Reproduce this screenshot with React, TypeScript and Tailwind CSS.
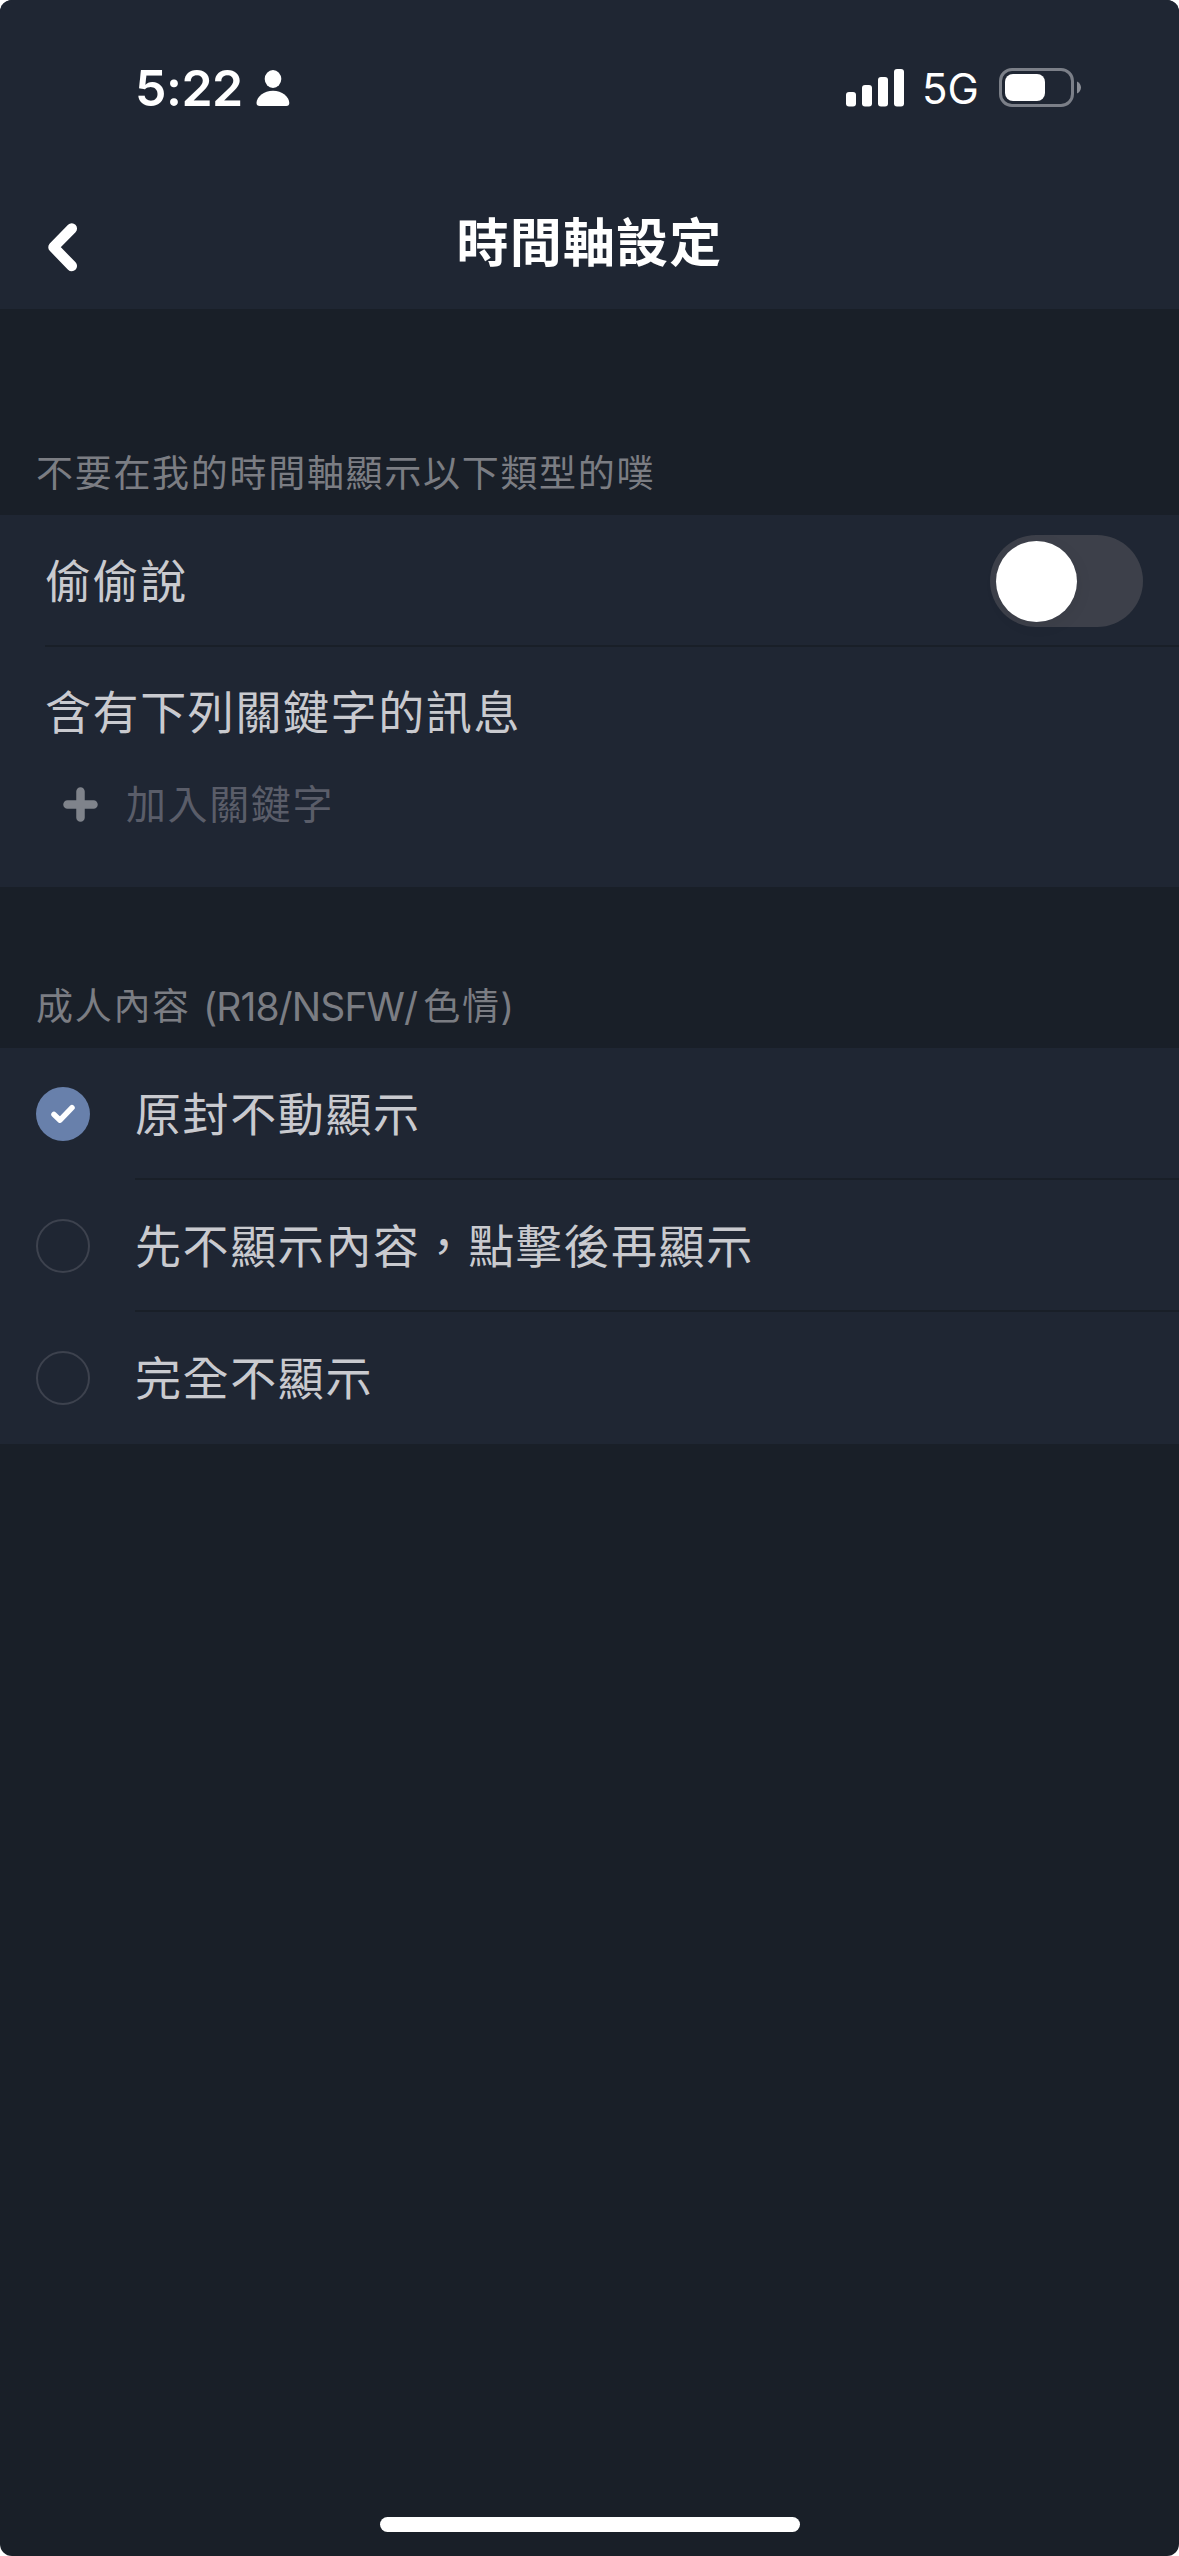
import type { ReactNode } from "react";

function StatusBar() {
  return (
    <div className="flex h-[177px] items-start justify-between pl-[135px] pr-[98px] pt-[66px] text-white">
      <div className="flex h-11 items-center">
        <span className="w-[109px] whitespace-nowrap text-[50px] font-semibold leading-none tracking-[-0.5px]">5:22</span>
        <svg className="ml-3 h-9 w-[34px]" viewBox="0 0 34 36" fill="currentColor">
          <ellipse cx="17" cy="9" rx="8.3" ry="9" />
          <path d="M17 20.800C26 20.800 33.300 27 33.300 33C33.300 35 32.300 36 30.300 36H3.700C1.700 36 0.500 35 0.500 33C0.500 27 8 20.800 17 20.800Z" />
        </svg>
      </div>
      <div className="flex h-[43px] items-center">
        <svg className="h-[38px] w-[58px]" viewBox="0 0 58 38" fill="currentColor">
          <rect x="0" y="23" width="10" height="14.500" rx="3" />
          <rect x="16" y="16" width="10" height="21.500" rx="3" />
          <rect x="32" y="8" width="10" height="29.500" rx="3" />
          <rect x="48" y="0" width="10" height="37.500" rx="3" />
        </svg>
        <span className="ml-[18px] w-[77px] whitespace-nowrap pt-[3px] text-[42px] leading-none">5G</span>
        <svg className="h-[39px] w-[82px]" viewBox="0 0 82 39">
          <rect x="1.500" y="1.500" width="72" height="36" rx="11.500" fill="none" stroke="#7b7f88" strokeWidth="3" />
          <rect x="6" y="6" width="40" height="27" rx="8" fill="#fff" />
          <path d="M78 13.500C80.500 14.500 82 17 82 19.500C82 22 80.500 24.500 78 25.500Z" fill="#8b8e96" />
        </svg>
      </div>
    </div>
  );
}

function NavBar() {
  return (
    <div className="grid h-[132px] grid-cols-[1fr_auto_1fr] items-center">
      <svg className="ml-12 mt-2 h-[49px] w-[30px]" viewBox="0 0 30 49" fill="none" stroke="#fff" strokeWidth="10.500" strokeLinecap="round" strokeLinejoin="round">
        <path d="M23.800 5.500L5.500 24.200L23.800 43" />
      </svg>
      <h1 className="pt-px text-[52px] font-bold leading-none tracking-[1.2px] text-white">時間軸設定</h1>
      <span />
    </div>
  );
}

function SectionTitle({ children }: { children: ReactNode }) {
  return (
    <h2 className="flex h-[84px] items-center whitespace-pre pl-9 pt-px text-[37px] font-normal leading-none tracking-[1.700px] text-[#7b7d83]">
      {children}
    </h2>
  );
}

function Toggle() {
  return (
    <button aria-label="偷偷說" className="mr-9 flex h-[92px] w-[153px] items-center rounded-full bg-[#3d404a] pl-1.5">
      <span className="size-[81px] rounded-full bg-white shadow-[2px_4px_16px_rgba(0,0,0,0.06)]" />
    </button>
  );
}

function Option({ label, checked, last }: { label: string; checked?: boolean; last?: boolean }) {
  return (
    <div className="flex h-[132px] pl-9">
      <div className="flex w-[99px] items-center">
        {checked ? (
          <span className="flex size-[54px] items-center justify-center rounded-full bg-[#6880ab]">
            <svg className="h-5 w-6" viewBox="0 0 24 20" fill="none" stroke="#fff" strokeWidth="5.500" strokeLinecap="round" strokeLinejoin="round">
              <path d="M3 10.500L9 16.200L21 3.700" />
            </svg>
          </span>
        ) : (
          <span className="size-[54px] rounded-full border-2 border-[#3d424e]" />
        )}
      </div>
      <div className={last ? "flex flex-1 items-center" : "flex flex-1 items-center border-b-2 border-[#191f28] pt-0.5"}>
        <span className="text-[46px] font-normal leading-none tracking-[1.600px] text-[#c9cacf]">{label}</span>
      </div>
    </div>
  );
}

export default function App() {
  return (
    <div className="h-[2556px] w-[1179px] bg-white" lang="zh-Hant">
      <div className="flex h-full flex-col overflow-hidden rounded-xl bg-[#191f28] font-[Inter,'Noto_Sans_CJK_TC',sans-serif]">
        <header className="bg-[#1f2633]">
          <StatusBar />
          <NavBar />
        </header>

        <section className="pt-[122px]">
          <SectionTitle>不要在我的時間軸顯示以下類型的噗</SectionTitle>
          <div className="h-[372px] bg-[#1f2633] pl-[45px] text-[46px] leading-none tracking-[1.600px] text-[#c9cacf]">
            <div className="flex h-[132px] items-center justify-between border-b-2 border-[#191f28] pt-0.5">
              <span>偷偷說</span>
              <Toggle />
            </div>
            <div className="flex h-[130px] items-center">含有下列關鍵字的訊息</div>
            <div className="flex h-[54px] items-center pl-[18px]">
              <svg className="size-[35px]" viewBox="0 0 35 35" fill="none" stroke="#7f838b" strokeWidth="8.500" strokeLinecap="round">
                <path d="M17.500 4.500V30.500M4.500 17.500H30.500" />
              </svg>
              <span className="ml-7 pt-0.5 text-[40px] tracking-[1.600px] text-[#5a5d69]">加入關鍵字</span>
            </div>
          </div>
        </section>

        <section className="pt-[77px]">
          <SectionTitle>
            <span>成人內容 </span>
            <span className="text-[39px] tracking-[-0.9px]">(R18/NSFW/</span>
            <span className="ml-1.5">色情</span>
            <span className="tracking-normal">)</span>
          </SectionTitle>
          <div className="bg-[#1f2633]">
            <Option label="原封不動顯示" checked />
            <Option label="先不顯示內容，點擊後再顯示" />
            <Option label="完全不顯示" last />
          </div>
        </section>

        <div className="mx-auto mb-6 mt-auto h-[15px] w-[420px] rounded-full bg-white" />
      </div>
    </div>
  );
}
